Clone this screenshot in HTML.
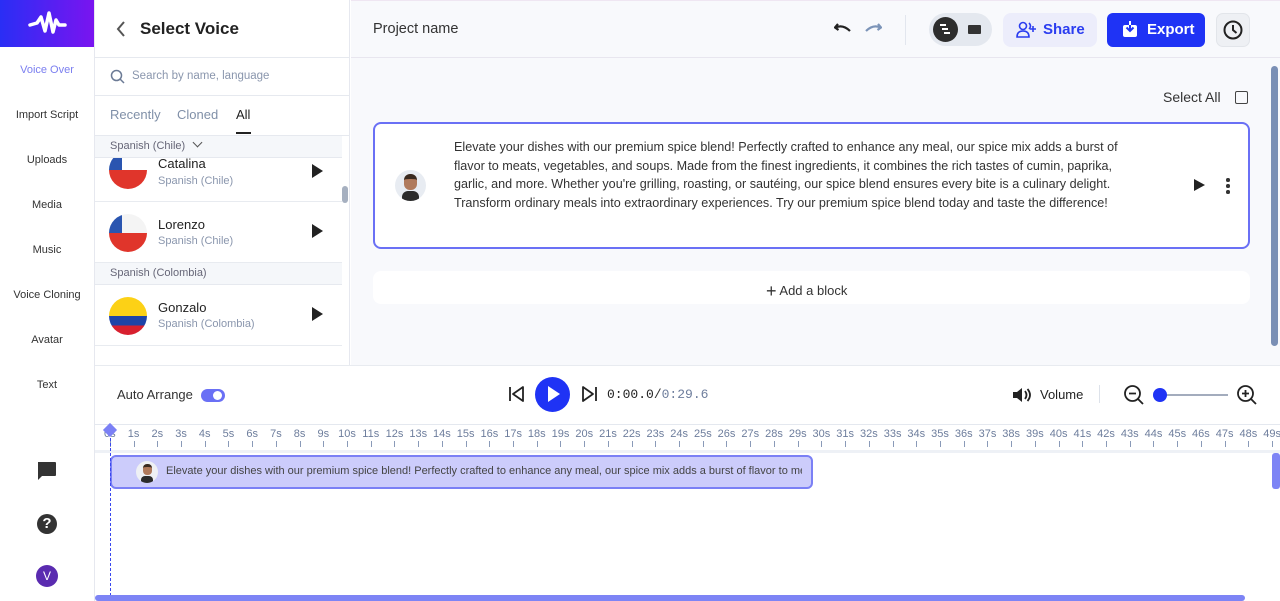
<!DOCTYPE html>
<html><head><meta charset="utf-8">
<style>
*{box-sizing:border-box;margin:0;padding:0}
body{width:1280px;height:601px;overflow:hidden;font-family:"Liberation Sans",sans-serif;background:#fff;position:relative;color:#222}
.abs{position:absolute}
.side{left:0;top:0;width:95px;height:601px;background:#fff;border-right:1px solid #e6e8ef}
.logo{left:0;top:0;width:94px;height:47px;background:linear-gradient(90deg,#2a2ef5,#7a14f0)}
.nav{width:94px;text-align:center;font-size:11px;color:#333;left:0}
.vp{left:95px;top:0;width:255px;height:365px;background:#fff;border-right:1px solid #e6e8ef}
.main{left:351px;top:0;width:929px;height:365px;background:#f8f9fc}
.hdr{left:351px;top:0;width:929px;height:58px;background:#f8f9fc;border-bottom:1px solid #e8e6ef;border-top:1px solid #efe6f2}
.item{left:95px;width:247px;height:61px;border-bottom:1px solid #e8ebf0;background:#fff}
.flag{position:absolute;left:14px;top:12px;width:38px;height:38px;border-radius:50%;overflow:hidden}
.nm{position:absolute;left:63px;top:13px;font-size:13px;color:#222}
.sub{position:absolute;left:63px;top:32px;font-size:11px;color:#8a96ad}
.play{position:absolute;left:217px;top:24px;width:0;height:0;border-left:11px solid #222;border-top:7px solid transparent;border-bottom:7px solid transparent}
.grp{left:95px;width:247px;height:22px;background:#f5f7fa;font-size:11px;color:#667;padding:5px 15px;border-bottom:1px solid #e6e9ef}
.ruler{left:98px;top:428px;display:flex;height:20px}
.ruler div{width:23.73px;flex:none;text-align:center;font-size:11px;color:#6d7d9c;white-space:nowrap;position:relative;overflow:visible}
.ruler div::after{content:"";position:absolute;left:11.8px;top:13px;width:1px;height:6px;background:#8a9ab8}
</style></head><body>

<div class="abs side"></div>
<div class="abs logo"><svg width="94" height="47" viewBox="0 0 94 47"><path d="M30 25 L37 23 L41 17 L45 31 L49 13 L53 32 L56 20 L59 25 L65 25" fill="none" stroke="#fff" stroke-width="3.5" stroke-linejoin="round" stroke-linecap="round"/></svg></div>
<div class="abs nav" style="top:64px;color:#7b7ff0">Voice Over</div>
<div class="abs nav" style="top:109px">Import Script</div>
<div class="abs nav" style="top:154px">Uploads</div>
<div class="abs nav" style="top:199px">Media</div>
<div class="abs nav" style="top:244px">Music</div>
<div class="abs nav" style="top:289px">Voice Cloning</div>
<div class="abs nav" style="top:334px">Avatar</div>
<div class="abs nav" style="top:379px">Text</div>
<svg class="abs" style="left:36px;top:461px" width="22" height="20" viewBox="0 0 22 20"><path d="M2 1h17a1 1 0 0 1 1 1v12a1 1 0 0 1-1 1H6l-4 4z" fill="#333"/></svg>
<div class="abs" style="left:37px;top:514px;width:20px;height:20px;border-radius:50%;background:#333;color:#fff;font-weight:bold;font-size:15px;text-align:center;line-height:20px">?</div>
<div class="abs" style="left:36px;top:565px;width:22px;height:22px;border-radius:50%;background:#5a2bb0;color:#fff;font-size:12px;text-align:center;line-height:22px">V</div>

<div class="abs vp"></div>
<svg class="abs" style="left:115px;top:20px" width="12" height="18" viewBox="0 0 12 18"><path d="M9 2 L3 9 L9 16" fill="none" stroke="#555" stroke-width="2"/></svg>
<div class="abs" style="left:140px;top:19px;font-size:17px;font-weight:bold;color:#222">Select Voice</div>
<div class="abs" style="left:95px;top:57px;width:255px;height:1px;background:#e6e9ef"></div>
<svg class="abs" style="left:110px;top:69px" width="15" height="15" viewBox="0 0 15 15"><circle cx="6.5" cy="6.5" r="5" fill="none" stroke="#6b7a95" stroke-width="1.5"/><path d="M10 10 L14 14" stroke="#6b7a95" stroke-width="1.5"/></svg>
<div class="abs" style="left:132px;top:70px;font-size:11.5px;color:#8a96ad">Search by name, language</div>
<div class="abs" style="left:95px;top:95px;width:255px;height:1px;background:#e6e9ef"></div>
<div class="abs" style="left:110px;top:107px;font-size:13px;color:#8090a8">Recently</div>
<div class="abs" style="left:177px;top:107px;font-size:13px;color:#8090a8">Cloned</div>
<div class="abs" style="left:236px;top:107px;font-size:13px;color:#222">All</div>
<div class="abs" style="left:236px;top:132px;width:15px;height:2px;background:#222"></div>
<div class="abs" style="left:95px;top:135px;width:255px;height:1px;background:#e6e9ef"></div>
<div class="abs grp" style="top:136px;padding-top:4px">Spanish (Chile) <span style="display:inline-block;width:7px;height:7px;border-right:1.5px solid #555;border-bottom:1.5px solid #555;transform:rotate(45deg);margin-left:6px;position:relative;top:-3px"></span></div>
<div class="abs" style="left:95px;top:158px;width:247px;height:44px;overflow:hidden;background:#fff;border-bottom:1px solid #e8ebf0">
 <div class="flag" style="top:-7px;background:linear-gradient(#fff 50%,#e0352b 50%)"><div style="position:absolute;left:0;top:0;width:13px;height:19px;background:#2a55b0"></div></div>
 <div class="nm" style="top:-2px">Catalina</div><div class="sub" style="top:17px">Spanish (Chile)</div><div class="play" style="top:6px"></div>
</div>
<div class="abs item" style="top:202px">
 <div class="flag" style="top:12px;background:linear-gradient(#f4f4f4 50%,#e0352b 50%)"><div style="position:absolute;left:0;top:0;width:13px;height:19px;background:#2a55b0"></div></div>
 <div class="nm" style="top:15px">Lorenzo</div><div class="sub" style="top:33px">Spanish (Chile)</div><div class="play" style="top:22px"></div>
</div>
<div class="abs grp" style="top:263px;padding-top:4px">Spanish (Colombia)</div>
<div class="abs item" style="top:285px">
 <div class="flag" style="top:12px;background:linear-gradient(#fcd116 50%,#1e44a8 50%,#1e44a8 75%,#d8202f 75%)"></div>
 <div class="nm" style="top:15px">Gonzalo</div><div class="sub" style="top:33px">Spanish (Colombia)</div><div class="play" style="top:22px"></div>
</div>
<div class="abs" style="left:342px;top:186px;width:6px;height:17px;border-radius:3px;background:#a6b0c0"></div>

<div class="abs main"></div>
<div class="abs hdr"></div>
<div class="abs" style="left:373px;top:21px;font-size:14.5px;color:#333">Project name</div>
<svg class="abs" style="left:834px;top:21px" width="18" height="14" viewBox="0 0 18 14"><path d="M4 3 L1 6.5 L4.5 9 M1.5 6.5 Q9 3 16 10" fill="none" stroke="#222" stroke-width="2.2"/></svg>
<svg class="abs" style="left:864px;top:21px" width="18" height="14" viewBox="0 0 18 14"><path d="M14 3 L17 6.5 L13.5 9 M16.5 6.5 Q9 3 2 10" fill="none" stroke="#7c94b8" stroke-width="2.2"/></svg>
<div class="abs" style="left:905px;top:15px;width:1px;height:30px;background:#e2e6ee"></div>
<div class="abs" style="left:929px;top:13px;width:63px;height:33px;border-radius:17px;background:#e4e8ef"></div>
<div class="abs" style="left:933px;top:17px;width:25px;height:25px;border-radius:50%;background:#2d2d2d"></div>
<div class="abs" style="left:940px;top:24px;width:6px;height:2px;background:#fff;box-shadow:2px 4px 0 #fff,4px 8px 0 #fff"></div>
<div class="abs" style="left:968px;top:25px;width:13px;height:9px;background:#333;border-radius:1px"></div>
<div class="abs" style="left:1003px;top:13px;width:94px;height:34px;border-radius:8px;background:#ecedfb"></div>
<svg class="abs" style="left:1016px;top:21px" width="22" height="18" viewBox="0 0 22 18"><circle cx="7" cy="5" r="3.5" fill="none" stroke="#2b3df0" stroke-width="1.6"/><path d="M1 16 Q1 10 7 10 Q13 10 13 16 Z M13 2 Q16 5 13 8" fill="none" stroke="#2b3df0" stroke-width="1.6"/><path d="M17 5v6M14 8h6" stroke="#2b3df0" stroke-width="1.6"/></svg>
<div class="abs" style="left:1043px;top:21px;font-size:15px;color:#2b3df0;font-weight:bold">Share</div>
<div class="abs" style="left:1107px;top:13px;width:98px;height:34px;border-radius:6px;background:#1f33f5"></div>
<svg class="abs" style="left:1122px;top:20px" width="16" height="18" viewBox="0 0 16 18"><rect x="1" y="5" width="14" height="12" rx="2" fill="#fff"/><path d="M8 1v10M4.5 7.5L8 11l3.5-3.5" fill="none" stroke="#1f33f5" stroke-width="2"/><path d="M8 1v4" stroke="#fff" stroke-width="2"/></svg>
<div class="abs" style="left:1147px;top:21px;font-size:15px;color:#fff;font-weight:bold">Export</div>
<div class="abs" style="left:1216px;top:13px;width:34px;height:34px;border-radius:7px;background:#eef0f4;border:1px solid #e2e5ea"></div>
<svg class="abs" style="left:1222px;top:19px" width="22" height="22" viewBox="0 0 22 22"><circle cx="11" cy="11" r="8.5" fill="none" stroke="#222" stroke-width="2"/><path d="M11 6v5l3.5 3" fill="none" stroke="#222" stroke-width="2"/></svg>
<div class="abs" style="left:1271px;top:66px;width:7px;height:280px;border-radius:4px;background:#7a8fb5"></div>
<div class="abs" style="left:1163px;top:89px;font-size:14px;color:#333">Select All</div>
<div class="abs" style="left:1235px;top:91px;width:13px;height:13px;border:1.5px solid #444;border-radius:2px"></div>

<div class="abs" style="left:373px;top:122px;width:877px;height:127px;background:#fff;border:2px solid #6a70f5;border-radius:8px"></div>
<div class="abs" style="left:395px;top:170px;width:31px;height:31px;border-radius:50%;background:#e8ecf2;overflow:hidden"><div style="position:absolute;left:9px;top:4px;width:13px;height:16px;border-radius:6px;background:#b07a5c;border-top:5px solid #3a2a20"></div><div style="position:absolute;left:7px;top:21px;width:17px;height:12px;border-radius:6px 6px 0 0;background:#2b2b2b"></div></div>
<div class="abs" style="left:454px;top:138px;width:680px;font-size:12.6px;line-height:18.7px;color:#333">Elevate your dishes with our premium spice blend! Perfectly crafted to enhance any meal, our spice mix adds a burst of flavor to meats, vegetables, and soups. Made from the finest ingredients, it combines the rich tastes of cumin, paprika, garlic, and more. Whether you're grilling, roasting, or sautéing, our spice blend ensures every bite is a culinary delight. Transform ordinary meals into extraordinary experiences. Try our premium spice blend today and taste the difference!</div>
<div class="abs" style="left:1194px;top:179px;border-left:11px solid #222;border-top:6.5px solid transparent;border-bottom:6.5px solid transparent"></div>
<div class="abs" style="left:1226px;top:178px;width:3.5px;height:3.5px;border-radius:50%;background:#333;box-shadow:0 6px 0 #333,0 12px 0 #333"></div>
<div class="abs" style="left:373px;top:271px;width:877px;height:33px;background:#fff;border-radius:8px"></div>
<div class="abs" style="left:766px;top:279px;font-size:13px;color:#333"><span style="font-size:18px;position:relative;top:2px">+</span> Add a block</div>

<!-- timeline -->
<div class="abs" style="left:95px;top:365px;width:1185px;height:236px;background:#fff;border-top:1px solid #e8ebf0"></div>
<div class="abs" style="left:117px;top:387px;font-size:13px;color:#333">Auto Arrange</div>
<div class="abs" style="left:201px;top:389px;width:24px;height:13px;border-radius:7px;background:#6a70f5"></div>
<div class="abs" style="left:213px;top:391px;width:9px;height:9px;border-radius:50%;background:#fff"></div>
<svg class="abs" style="left:508px;top:385px" width="18" height="18" viewBox="0 0 18 18"><path d="M2 2v14M15 2L5 9l10 7z" fill="none" stroke="#222" stroke-width="1.8" stroke-linejoin="round"/></svg>
<div class="abs" style="left:535px;top:377px;width:35px;height:35px;border-radius:50%;background:#1f33f5"></div>
<div class="abs" style="left:548px;top:386px;border-left:12px solid #fff;border-top:8px solid transparent;border-bottom:8px solid transparent"></div>
<svg class="abs" style="left:580px;top:385px" width="18" height="18" viewBox="0 0 18 18"><path d="M16 2v14M3 2l10 7-10 7z" fill="none" stroke="#222" stroke-width="1.8" stroke-linejoin="round"/></svg>
<div class="abs" style="left:607px;top:387px;font-family:'Liberation Mono',monospace;font-size:13px;color:#222">0:00.0<span style="color:#333">/</span><span style="color:#6d7d9c">0:29.6</span></div>
<svg class="abs" style="left:1012px;top:386px" width="20" height="18" viewBox="0 0 20 18"><path d="M1 6h4l5-4v14l-5-4H1z" fill="#222"/><path d="M13 5q3 4 0 8M15.5 3q5 6 0 12" fill="none" stroke="#222" stroke-width="1.8"/></svg>
<div class="abs" style="left:1040px;top:387px;font-size:13px;color:#222">Volume</div>
<div class="abs" style="left:1099px;top:385px;width:1px;height:18px;background:#dde2ea"></div>
<svg class="abs" style="left:1123px;top:384px" width="22" height="22" viewBox="0 0 22 22"><circle cx="9.5" cy="9.5" r="7.5" fill="none" stroke="#222" stroke-width="1.8"/><path d="M6 9.5h7M15 15l5 5" stroke="#222" stroke-width="1.8"/></svg>
<div class="abs" style="left:1166px;top:394px;width:62px;height:2px;background:#a3acbd"></div>
<div class="abs" style="left:1153px;top:388px;width:14px;height:14px;border-radius:50%;background:#1f33f5"></div>
<svg class="abs" style="left:1236px;top:384px" width="22" height="22" viewBox="0 0 22 22"><circle cx="9.5" cy="9.5" r="7.5" fill="none" stroke="#222" stroke-width="1.8"/><path d="M6 9.5h7M9.5 6v7M15 15l5 5" stroke="#222" stroke-width="1.8"/></svg>

<div class="abs" style="left:95px;top:424px;width:1185px;height:1px;background:#e4e8ef"></div>
<div class="abs" style="left:95px;top:450px;width:1185px;height:3px;background:#eef1f6"></div>
<div class="abs ruler"><div>0s</div><div>1s</div><div>2s</div><div>3s</div><div>4s</div><div>5s</div><div>6s</div><div>7s</div><div>8s</div><div>9s</div><div>10s</div><div>11s</div><div>12s</div><div>13s</div><div>14s</div><div>15s</div><div>16s</div><div>17s</div><div>18s</div><div>19s</div><div>20s</div><div>21s</div><div>22s</div><div>23s</div><div>24s</div><div>25s</div><div>26s</div><div>27s</div><div>28s</div><div>29s</div><div>30s</div><div>31s</div><div>32s</div><div>33s</div><div>34s</div><div>35s</div><div>36s</div><div>37s</div><div>38s</div><div>39s</div><div>40s</div><div>41s</div><div>42s</div><div>43s</div><div>44s</div><div>45s</div><div>46s</div><div>47s</div><div>48s</div><div>49s</div></div>
<div class="abs" style="left:1272px;top:453px;width:8px;height:36px;border-radius:3px;background:#7d84f5"></div>
<div class="abs" style="left:110px;top:455px;width:703px;height:34px;border-radius:6px;background:#ccccfb;border:2px solid #7b80f5"></div>
<div class="abs" style="left:136px;top:461px;width:22px;height:22px;border-radius:50%;background:#eef0f4;overflow:hidden"><div style="position:absolute;left:7px;top:3px;width:9px;height:11px;border-radius:4px;background:#b07a5c;border-top:3px solid #3a2a20"></div><div style="position:absolute;left:5px;top:15px;width:12px;height:8px;border-radius:4px 4px 0 0;background:#2b2b2b"></div></div>
<div class="abs" style="left:166px;top:465px;width:636px;overflow:hidden;white-space:nowrap;font-size:11px;color:#444">Elevate your dishes with our premium spice blend! Perfectly crafted to enhance any meal, our spice mix adds a burst of flavor to meats</div>
<div class="abs" style="left:110px;top:438px;width:0;height:158px;border-left:1.5px dashed #3a48f0"></div>
<div class="abs" style="left:105px;top:425px;width:10px;height:10px;background:#7b80f5;transform:rotate(45deg)"></div>
<div class="abs" style="left:95px;top:595px;width:1150px;height:6px;border-radius:3px;background:#7d84f5"></div>
</body></html>
